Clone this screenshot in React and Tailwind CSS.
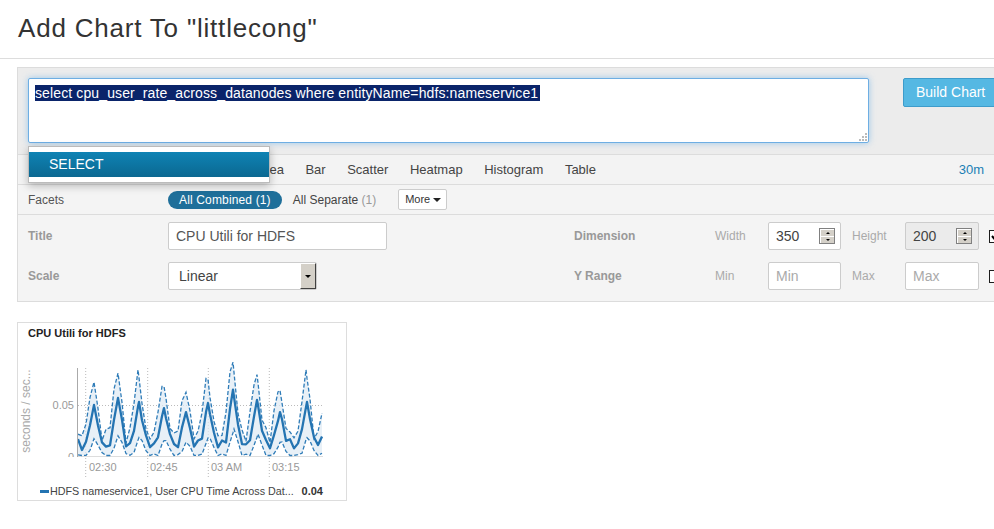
import React from 'react'

const PEAKS = [
  [94, 0.05], [118, 0.057], [139, 0.053], [164, 0.047], [186, 0.043],
  [208, 0.052], [233, 0.065], [257, 0.055], [280, 0.043], [307, 0.053], [328, 0.05],
]

function mainAt(x) {
  const base = 0.011 + 0.004 * Math.sin(x * 0.83) + 0.002 * Math.cos(x * 2.1)
  let v = base
  for (const [p, h] of PEAKS) {
    const t = 1 - Math.abs(x - p) / 8
    if (t > 0) v = Math.max(v, base + (h - base) * t)
  }
  return v
}

function buildSeries() {
  const xs = []
  for (let x = 78; x <= 324; x += 4) xs.push(x)
  PEAKS.forEach(([p]) => { if (p < 324) xs.push(p) })
  xs.sort((a, b) => a - b)
  return xs.map((x) => {
    const m = mainAt(x)
    const u = mainAt(x + 1) * 1.5 + 0.005
    const l = Math.max(0.0005, mainAt(x - 1) * 0.5 - 0.006)
    return { x: x - 18, m, u, l }
  })
}

const sy = (v) => 116 - v * 1020

function toPath(pts, key) {
  return pts.map((p, i) => `${i ? 'L' : 'M'}${p.x.toFixed(1)},${sy(p[key]).toFixed(1)}`).join(' ')
}

function Chart() {
  const pts = buildSeries()
  const band =
    toPath(pts, 'u') +
    ' ' +
    [...pts].reverse().map((p) => `L${p.x.toFixed(1)},${sy(p.l).toFixed(1)}`).join(' ') +
    ' Z'
  const vlines = [67.7, 129.7, 190.3, 251.3]
  const xlabels = [['02:30', 71], ['02:45', 132], ['03 AM', 193], ['03:15', 254]]

  return (
    <svg width="328" height="142" className="block">
      <defs>
        <clipPath id="plot">
          <rect x="60" y="18" width="245" height="99" />
        </clipPath>
        <clipPath id="ylab">
          <rect x="0" y="0" width="60" height="117" />
        </clipPath>
      </defs>
      <text
        x="9"
        y="71"
        transform="rotate(-90 9 71)"
        textAnchor="middle"
        dominantBaseline="middle"
        fontSize="12"
        fill="#aaa"
      >
        seconds / sec...
      </text>
      <g clipPath="url(#ylab)" fontSize="11" fill="#999" textAnchor="end">
        <text x="56" y="69">0.05</text>
        <text x="56" y="121">0</text>
      </g>
      <line x1="59.5" y1="28" x2="59.5" y2="117" stroke="#aaa" />
      <line x1="60" y1="116.5" x2="305" y2="116.5" stroke="#ddd" />
      <line x1="60" y1="65.5" x2="305" y2="65.5" stroke="#bbb" strokeDasharray="1 2" />
      {vlines.map((x) => (
        <line key={x} x1={x} y1="28" x2={x} y2="138" stroke="#bbb" strokeDasharray="1 2" />
      ))}
      <g clipPath="url(#plot)">
        <path d={band} fill="#deeaf4" opacity="0.7" />
        <path d={toPath(pts, 'u')} fill="none" stroke="#2f7cb8" strokeWidth="1.3" strokeDasharray="4 2" />
        <path d={toPath(pts, 'l')} fill="none" stroke="#2f7cb8" strokeWidth="1.3" strokeDasharray="4 2" />
        <path d={toPath(pts, 'm')} fill="none" stroke="#2474b2" strokeWidth="2.3" strokeLinejoin="round" />
      </g>
      {xlabels.map(([t, x]) => (
        <text key={t} x={x} y="131" fontSize="11" fill="#999">
          {t}
        </text>
      ))}
    </svg>
  )
}

function Spinner() {
  return (
    <div className="flex flex-col w-[16px] h-[16px] border border-[#808080]">
      <div className="flex-1 bg-[#d4d0c8] border-t border-l border-t-white border-l-white flex items-center justify-center">
        <div className="w-0 h-0 border-x-[2px] border-b-[2px] border-x-transparent border-b-black" />
      </div>
      <div className="flex-1 bg-[#d4d0c8] border-t border-l border-t-white border-l-white flex items-center justify-center">
        <div className="w-0 h-0 border-x-[2px] border-t-[2px] border-x-transparent border-t-black" />
      </div>
    </div>
  )
}

function CheckBox({ checked }) {
  return (
    <div className="ml-[10px] w-[13px] h-[13px] shrink-0 border border-[#1c1c1c] bg-white">
      {checked ? (
        <svg width="11" height="11" className="block">
          <path d="M2 5 L4.5 8 L9 2" fill="none" stroke="#000" strokeWidth="2" />
        </svg>
      ) : null}
    </div>
  )
}

function Label({ children }) {
  return <div className="w-[140px] shrink-0 font-bold text-[12px] text-[#999]">{children}</div>
}

export default function App() {
  const tabs = ['Line', 'Stack Area', 'Bar', 'Scatter', 'Heatmap', 'Histogram', 'Table']

  return (
    <div className="w-[994px] h-[529px] overflow-hidden bg-white font-['Liberation_Sans',Arial,sans-serif] text-[#333]">
      <div className="h-[59px] border-b border-[#ddd] pl-[18px] pt-[13px]">
        <h1 className="text-[26px] leading-[30px] tracking-[0.8px] font-normal text-[#333]">Add Chart To "littlecong"</h1>
      </div>

      <div className="relative ml-[17px] mt-[8px] w-[1000px] border border-[#dcdcdc]">
        <div className="h-[86px] bg-[#ececec] flex items-start pl-[10px] pt-[10px]">
          <div className="relative w-[841px] h-[65px] bg-white border border-[#6eaee3] rounded-[2px] shadow-[0_0_6px_rgba(102,175,233,0.6)] pl-[6px] pt-[6px]">
            <div className="w-fit bg-[#0a246a] text-white text-[14px] leading-[16px] tracking-[0.12px] pr-[2px]">
              select cpu_user_rate_across_datanodes where entityName=hdfs:nameservice1
            </div>
            <svg className="absolute right-[1px] bottom-[1px]" width="8" height="8">
              {[[6, 0], [6, 3], [3, 3], [6, 6], [3, 6], [0, 6]].map(([x, y]) => (
                <rect key={`${x}-${y}`} x={x} y={y} width="2" height="2" fill="#bbb" />
              ))}
            </svg>
          </div>
          <button className="ml-[34px] w-[100px] h-[29px] shrink-0 bg-[#55b8e3] border border-[#3d9ccb] rounded-[2px] text-white text-[14px] text-left pl-[12px]">
            Build Chart
          </button>
        </div>

        <div className="h-[30px] border-t border-[#dcdcdc] bg-[#f3f3f3] flex items-center pl-[157px] pr-[32px] text-[13px] text-[#444]">
          <div className="flex gap-[21.5px]">
            {tabs.map((t) => (
              <span key={t}>{t}</span>
            ))}
          </div>
          <span className="ml-auto text-[#1a7fb5]">30m</span>
        </div>

        <div className="h-[30px] border-t border-[#dcdcdc] bg-[#f4f4f4] flex items-center pl-[10px] text-[12px]">
          <div className="w-[140px] text-[#555]">Facets</div>
          <div className="h-[18px] px-[11px] rounded-full bg-[#1f6f9a] text-white flex items-center tracking-[0.15px]">All Combined (1)</div>
          <div className="ml-[11px] text-[#444]">
            All Separate <span className="text-[#999]">(1)</span>
          </div>
          <div className="ml-[22px] h-[21px] w-[49px] bg-white border border-[#ccc] rounded-[2px] flex items-center pl-[6px] gap-[3px] text-[11px] text-[#333]">
            More
            <span className="w-0 h-0 border-x-[4px] border-t-[4px] border-x-transparent border-t-[#222]" />
          </div>
        </div>

        <div className="border-t border-[#dcdcdc] bg-[#f4f4f4] pl-[10px] pt-[7px] pb-[11px] flex flex-col gap-[12px]">
          <div className="flex items-center h-[28px]">
            <Label>Title</Label>
            <div className="w-[406px] shrink-0">
              <div className="w-[219px] h-[28px] bg-white border border-[#ccc] rounded-[2px] flex items-center pl-[7px] text-[14px] text-[#555]">
                CPU Utili for HDFS
              </div>
            </div>
            <div className="w-[141px] shrink-0 font-bold text-[12px] text-[#999]">Dimension</div>
            <div className="w-[53px] shrink-0 text-[12px] text-[#aaa]">Width</div>
            <div className="w-[73px] h-[28px] shrink-0 bg-white border border-[#ccc] rounded-[2px] flex items-center justify-between pl-[7px] pr-[5px] text-[14px] text-[#444]">
              350
              <Spinner />
            </div>
            <div className="ml-[11px] w-[53px] shrink-0 text-[12px] text-[#aaa]">Height</div>
            <div className="w-[74px] h-[28px] shrink-0 bg-[#ebebeb] border border-[#ccc] rounded-[2px] flex items-center justify-between pl-[7px] pr-[6px] text-[14px] text-[#444]">
              200
              <Spinner />
            </div>
            <CheckBox checked />
          </div>

          <div className="flex items-center h-[28px]">
            <Label>Scale</Label>
            <div className="w-[406px] shrink-0">
              <div className="w-[149px] h-[28px] bg-white border border-[#ccc] rounded-[2px] flex items-center justify-between pl-[10px] text-[14px] text-[#444]">
                Linear
                <div className="w-[16px] h-[26px] bg-[#d4d0c8] border border-t-white border-l-white border-r-[#404040] border-b-[#404040] flex items-center justify-center">
                  <div className="w-0 h-0 border-x-[3px] border-t-[3px] border-x-transparent border-t-black" />
                </div>
              </div>
            </div>
            <div className="w-[141px] shrink-0 font-bold text-[12px] text-[#999]">Y Range</div>
            <div className="w-[53px] shrink-0 text-[12px] text-[#aaa]">Min</div>
            <div className="w-[73px] h-[28px] shrink-0 bg-white border border-[#ccc] rounded-[2px] flex items-center pl-[7px] text-[14px] text-[#aaa]">
              Min
            </div>
            <div className="ml-[11px] w-[53px] shrink-0 text-[12px] text-[#aaa]">Max</div>
            <div className="w-[74px] h-[28px] shrink-0 bg-white border border-[#ccc] rounded-[2px] flex items-center pl-[7px] text-[14px] text-[#aaa]">
              Max
            </div>
            <CheckBox />
          </div>
        </div>

        <div className="absolute left-[10px] top-[78px] w-[242px] h-[37px] bg-white border border-[#bbb] shadow-[0_3px_8px_rgba(0,0,0,0.25)] pt-[5px]">
          <div className="h-[25px] bg-gradient-to-b from-[#0f83b4] to-[#0b6891] text-white text-[14px] flex items-center pl-[20px]">
            SELECT
          </div>
        </div>
      </div>

      <div className="ml-[17px] mt-[20px] w-[330px] h-[179px] border border-[#ddd]">
        <div className="pl-[10px] pt-[4px] h-[17px] text-[11px] leading-[13px] font-bold text-[#222]">CPU Utili for HDFS</div>
        <Chart />
        <div className="h-[18px] flex items-center pl-[22px] text-[10.75px] text-[#444]">
          <span className="w-[9px] h-[3px] bg-[#2474b2] mr-[1px]" />
          <span>HDFS nameservice1, User CPU Time Across Dat...</span>
          <span className="ml-auto mr-[23px] font-bold text-[11px] text-[#333]">0.04</span>
        </div>
      </div>
    </div>
  )
}
